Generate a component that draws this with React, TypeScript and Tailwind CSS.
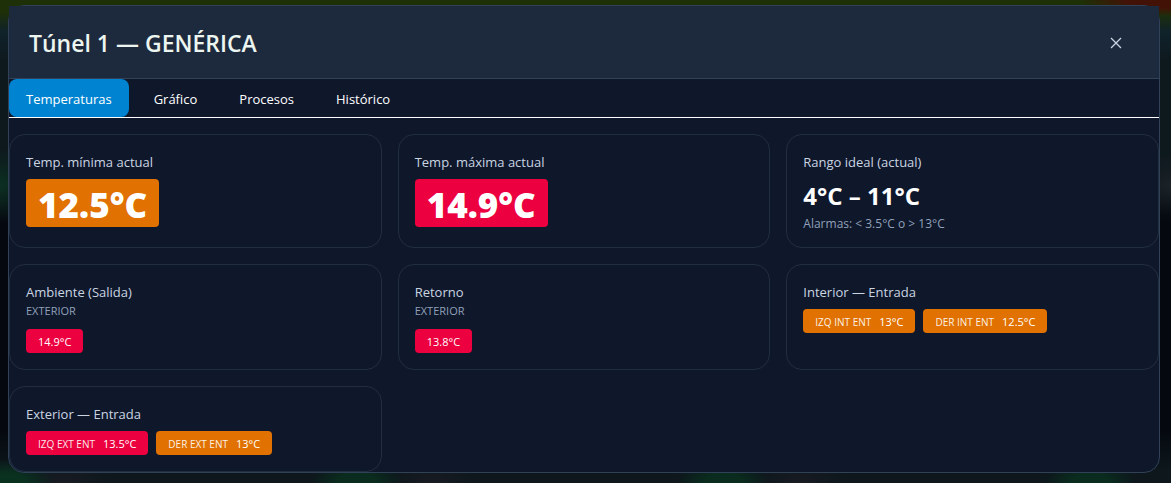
import { useState } from "react";

const tabs = ["Temperaturas", "Gráfico", "Procesos", "Histórico"];

const tones = {
  warn: "bg-[#e17100]",
  alarm: "bg-[#ec003f]",
};
type Tone = keyof typeof tones;
type Reading = { name?: string; value: string; tone: Tone };

function Card({ title, children }: { title: string; children: React.ReactNode }) {
  return (
    <section className="rounded-2xl border border-[#212e40] p-4">
      <h3 className="text-[13px] leading-[22px] text-[#cad5e2]">{title}</h3>
      {children}
    </section>
  );
}

function Extreme({ title, value, tone }: { title: string; value: string; tone: Tone }) {
  return (
    <Card title={title}>
      <p className={`mt-1.5 flex h-12 w-fit items-center rounded px-3 pt-1 text-[35px] font-extrabold text-white ${tones[tone]}`}>{value}</p>
    </Card>
  );
}

function Sensor({ title, place, readings }: { title: string; place?: string; readings: Reading[] }) {
  return (
    <Card title={title}>
      {place && <p className="mb-2.5 text-[11px] leading-4 text-[#90a1b9]">{place}</p>}
      <ul className="mt-1.5 flex flex-wrap gap-2">
        {readings.map((r) => (
          <li key={r.name ?? r.value} className={`flex h-6 items-center gap-2 rounded px-3 pt-0.5 text-[11px] text-white ${tones[r.tone]}`}>
            {r.name && <span className="text-[10px] opacity-90">{r.name}</span>}
            <span>{r.value}</span>
          </li>
        ))}
      </ul>
    </Card>
  );
}

export default function App() {
  const [active, setActive] = useState(tabs[0]);
  return (
    <div className="min-h-screen bg-[#070c12] bg-[radial-gradient(90px_16px_at_100%_0,#431207_50%,transparent),linear-gradient(to_bottom,#1d3007_12px,#10222b_32px,transparent_60px),radial-gradient(40px_36px_at_0_185px,#0c3022,transparent),radial-gradient(40px_30px_at_100%_185px,#1b2228,transparent),radial-gradient(46px_24px_at_8px_100%,#0a3020_40%,transparent),radial-gradient(46px_24px_at_357px_100%,#0a2c1e_40%,transparent),radial-gradient(46px_24px_at_723px_100%,#0a2c1e_40%,transparent),radial-gradient(46px_24px_at_1090px_100%,#0a2c1e_40%,transparent),radial-gradient(46px_24px_at_65px_100%,#181c22,transparent),radial-gradient(46px_24px_at_432px_100%,#181c22,transparent),radial-gradient(46px_24px_at_800px_100%,#181c22,transparent),linear-gradient(to_bottom,#0e191e_160px,#05090f_225px,#05090f_430px,#0d171c_470px)] pt-[5px] pr-[11px] pb-2.5 pl-2 font-['Open_Sans',sans-serif]">
      <main className="rounded-2xl border border-[#314158] bg-[#0f172b] text-white">
        <header className="flex items-center justify-between border-b border-[#314158] bg-[#1d293d] px-5 pt-[21px] pb-[19px]">
          <h1 className="text-[23px] leading-8 font-semibold text-[#ecf5f0]">Túnel 1 — GENÉRICA</h1>
          <button type="button" aria-label="Cerrar" className="mr-[17px] text-[#cad5e2]">
            <svg width="12" height="12" viewBox="0 0 12 12" stroke="currentColor" strokeWidth="1.3" fill="none">
              <path d="M1 1l10 10M11 1L1 11" />
            </svg>
          </button>
        </header>
        <nav className="flex gap-2 border-b border-white">
          {tabs.map((t) => (
            <button key={t} type="button" onClick={() => setActive(t)} className={`rounded-lg px-[17px] pt-2.5 pb-2 text-[13px] leading-5 ${t === active ? "bg-[#0084d1]" : ""}`}>
              {t}
            </button>
          ))}
        </nav>
        <div className="mt-4 grid grid-cols-3 gap-4">
          <Extreme title="Temp. mínima actual" value="12.5°C" tone="warn" />
          <Extreme title="Temp. máxima actual" value="14.9°C" tone="alarm" />
          <Card title="Rango ideal (actual)">
            <p className="mt-1.5 text-2xl leading-[34px] font-bold">4°C – 11°C</p>
            <p className="mt-1 text-xs leading-[14px] text-[#90a1b9]">Alarmas: &lt; 3.5°C o &gt; 13°C</p>
          </Card>
          <Sensor title="Ambiente (Salida)" place="EXTERIOR" readings={[{ value: "14.9°C", tone: "alarm" }]} />
          <Sensor title="Retorno" place="EXTERIOR" readings={[{ value: "13.8°C", tone: "alarm" }]} />
          <Sensor title="Interior — Entrada" readings={[{ name: "IZQ INT ENT", value: "13°C", tone: "warn" }, { name: "DER INT ENT", value: "12.5°C", tone: "warn" }]} />
          <Sensor title="Exterior — Entrada" readings={[{ name: "IZQ EXT ENT", value: "13.5°C", tone: "alarm" }, { name: "DER EXT ENT", value: "13°C", tone: "warn" }]} />
        </div>
      </main>
    </div>
  );
}
